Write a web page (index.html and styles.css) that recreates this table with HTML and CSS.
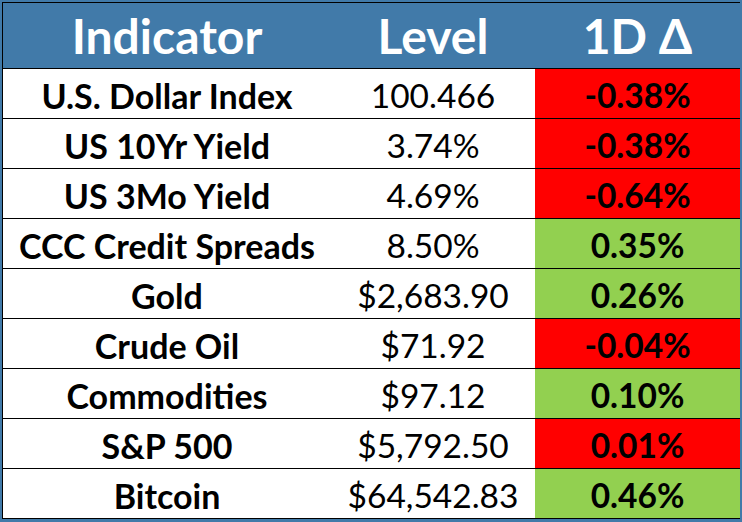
FILE: index.html
```html
<!DOCTYPE html>
<html>
<head>
<meta charset="utf-8">
<link rel="stylesheet" href="styles.css">
</head>
<body>
<div class="frame">
  <div class="table">
    <div class="cell head">Indicator</div>
    <div class="cell head">Level</div>
    <div class="cell head">1D Δ</div>

    <div class="cell name">U.S. Dollar Index</div>
    <div class="cell level">100.466</div>
    <div class="cell chg down">-0.38%</div>

    <div class="cell name">US 10Yr Yield</div>
    <div class="cell level">3.74%</div>
    <div class="cell chg down">-0.38%</div>

    <div class="cell name">US 3Mo Yield</div>
    <div class="cell level">4.69%</div>
    <div class="cell chg down">-0.64%</div>

    <div class="cell name">CCC Credit Spreads</div>
    <div class="cell level">8.50%</div>
    <div class="cell chg up">0.35%</div>

    <div class="cell name">Gold</div>
    <div class="cell level">$2,683.90</div>
    <div class="cell chg up">0.26%</div>

    <div class="cell name">Crude Oil</div>
    <div class="cell level">$71.92</div>
    <div class="cell chg down">-0.04%</div>

    <div class="cell name">Commodities</div>
    <div class="cell level">$97.12</div>
    <div class="cell chg up">0.10%</div>

    <div class="cell name">S&amp;P 500</div>
    <div class="cell level">$5,792.50</div>
    <div class="cell chg down">0.01%</div>

    <div class="cell name">Bitcoin</div>
    <div class="cell level">$64,542.83</div>
    <div class="cell chg up">0.46%</div>
  </div>
</div>
</body>
</html>
```
FILE: styles.css
```css
html, body {
  margin: 0;
  padding: 0;
  background: #417aa9;
}
.frame {
  width: 742px;
  height: 522px;
  box-sizing: border-box;
  padding: 2px;
}
.table {
  display: grid;
  grid-template-columns: 328px 204px 205px;
  grid-template-rows: 66px repeat(9, 50px);
  border-top: 1px solid #000;
  border-left: 1px solid #000;
  background: #fff;
  font-family: "Lato", "Liberation Sans", sans-serif;
  color: #000;
}
.cell {
  display: flex;
  align-items: center;
  justify-content: center;
  border-bottom: 1px solid #000;
  box-sizing: border-box;
  white-space: nowrap;
  padding-top: 3px;
}
.head {
  background: #417aa9;
  color: #fff;
  font-weight: 700;
  font-size: 48px;
  padding-top: 0;
}
.name {
  font-weight: 700;
  font-size: 34px;
}
.level {
  font-weight: 400;
  font-size: 33.5px;
}
.chg {
  font-weight: 700;
  font-size: 33.5px;
}
.down { background: #ff0000; }
.up { background: #92d050; }
```
